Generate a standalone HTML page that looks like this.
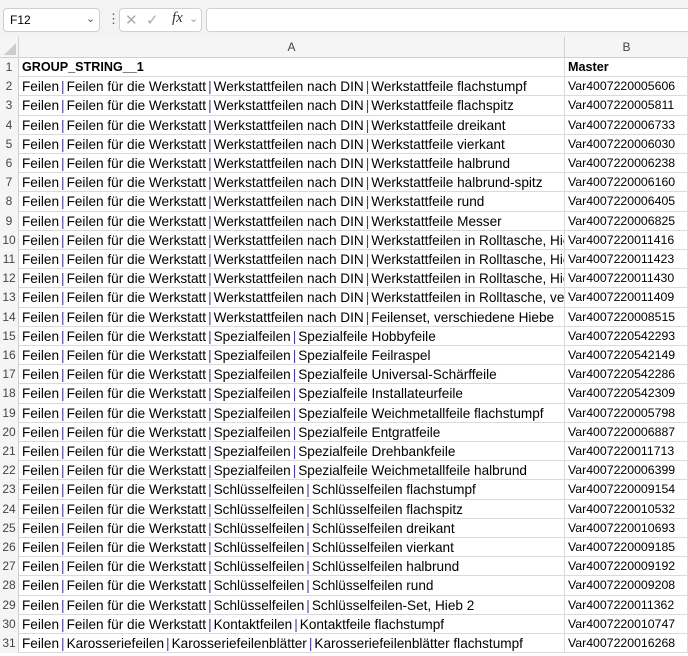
<!DOCTYPE html><html><head><style>
body{margin:0;width:688px;height:656px;overflow:hidden;background:#fff;font-family:"Liberation Sans",sans-serif;position:relative}
.top{position:absolute;left:0;top:0;width:688px;height:37px;background:#f3f3f3;border-bottom:1px solid #e1e1e1}
.box{position:absolute;top:8px;height:24px;background:#fff;border:1px solid #d0d0d0;border-radius:4px;box-sizing:border-box}
.hdr{position:absolute;top:37px;height:21px;background:#f5f5f5;border-bottom:1px solid #d0d0d0;box-sizing:border-box;font-size:12px;color:#444;text-align:center;line-height:21px}
.rh{position:absolute;left:0;width:19px;background:#f5f5f5;font-size:12px;color:#444;text-align:center;border-right:1px solid #d0d0d0;box-sizing:border-box}
.c{position:absolute;color:#000;white-space:nowrap;overflow:hidden;border-bottom:1px solid #dadada;border-right:1px solid #dadada;box-sizing:border-box;padding-left:3px;line-height:19px}
.a{font-size:13.6px}.b{font-size:12.3px}
.p{color:#4040a0;margin:0 2px}
</style></head><body>
<div class="top"></div>
<div class="box" style="left:3px;width:97px"><span style="position:absolute;left:6px;top:4px;font-size:12px">F12</span><span style="position:absolute;left:82px;top:3px;font-size:11px;color:#555">&#8964;</span></div>
<div style="position:absolute;left:107px;top:11px;font-size:13px;color:#555">&#8942;</div>
<div class="box" style="left:119px;width:83px"><span style="position:absolute;left:5px;top:2px;font-size:15px;color:#aaa">&#10005;</span><span style="position:absolute;left:26px;top:2px;font-size:15px;color:#aaa">&#10003;</span><span style="position:absolute;left:52px;top:1px;font-size:15px;font-style:italic;font-family:'Liberation Serif',serif;color:#333">fx</span><span style="position:absolute;left:69px;top:3px;font-size:11px;color:#999">&#8964;</span></div>
<div class="box" style="left:206px;width:490px"></div>
<div class="hdr" style="left:0;width:19px;border-right:1px solid #d0d0d0"><svg width="14" height="14" style="position:absolute;left:3px;top:5px"><path d="M13 1L13 13L1 13Z" fill="#ccc"/></svg></div>
<div class="hdr" style="left:19px;width:546px;border-right:1px solid #d0d0d0">A</div>
<div class="hdr" style="left:565px;width:123px">B</div>
<div id="g"></div>
<script>
var rows=[["GROUP_STRING__1","Master"],
["Feilen|Feilen für die Werkstatt|Werkstattfeilen nach DIN|Werkstattfeile flachstumpf","Var4007220005606"],
["Feilen|Feilen für die Werkstatt|Werkstattfeilen nach DIN|Werkstattfeile flachspitz","Var4007220005811"],
["Feilen|Feilen für die Werkstatt|Werkstattfeilen nach DIN|Werkstattfeile dreikant","Var4007220006733"],
["Feilen|Feilen für die Werkstatt|Werkstattfeilen nach DIN|Werkstattfeile vierkant","Var4007220006030"],
["Feilen|Feilen für die Werkstatt|Werkstattfeilen nach DIN|Werkstattfeile halbrund","Var4007220006238"],
["Feilen|Feilen für die Werkstatt|Werkstattfeilen nach DIN|Werkstattfeile halbrund-spitz","Var4007220006160"],
["Feilen|Feilen für die Werkstatt|Werkstattfeilen nach DIN|Werkstattfeile rund","Var4007220006405"],
["Feilen|Feilen für die Werkstatt|Werkstattfeilen nach DIN|Werkstattfeile Messer","Var4007220006825"],
["Feilen|Feilen für die Werkstatt|Werkstattfeilen nach DIN|Werkstattfeilen in Rolltasche, Hieb","Var4007220011416"],
["Feilen|Feilen für die Werkstatt|Werkstattfeilen nach DIN|Werkstattfeilen in Rolltasche, Hieb","Var4007220011423"],
["Feilen|Feilen für die Werkstatt|Werkstattfeilen nach DIN|Werkstattfeilen in Rolltasche, Hieb","Var4007220011430"],
["Feilen|Feilen für die Werkstatt|Werkstattfeilen nach DIN|Werkstattfeilen in Rolltasche, verschieden","Var4007220011409"],
["Feilen|Feilen für die Werkstatt|Werkstattfeilen nach DIN|Feilenset, verschiedene Hiebe","Var4007220008515"],
["Feilen|Feilen für die Werkstatt|Spezialfeilen|Spezialfeile Hobbyfeile","Var4007220542293"],
["Feilen|Feilen für die Werkstatt|Spezialfeilen|Spezialfeile Feilraspel","Var4007220542149"],
["Feilen|Feilen für die Werkstatt|Spezialfeilen|Spezialfeile Universal-Schärffeile","Var4007220542286"],
["Feilen|Feilen für die Werkstatt|Spezialfeilen|Spezialfeile Installateurfeile","Var4007220542309"],
["Feilen|Feilen für die Werkstatt|Spezialfeilen|Spezialfeile Weichmetallfeile flachstumpf","Var4007220005798"],
["Feilen|Feilen für die Werkstatt|Spezialfeilen|Spezialfeile Entgratfeile","Var4007220006887"],
["Feilen|Feilen für die Werkstatt|Spezialfeilen|Spezialfeile Drehbankfeile","Var4007220011713"],
["Feilen|Feilen für die Werkstatt|Spezialfeilen|Spezialfeile Weichmetallfeile halbrund","Var4007220006399"],
["Feilen|Feilen für die Werkstatt|Schlüsselfeilen|Schlüsselfeilen flachstumpf","Var4007220009154"],
["Feilen|Feilen für die Werkstatt|Schlüsselfeilen|Schlüsselfeilen flachspitz","Var4007220010532"],
["Feilen|Feilen für die Werkstatt|Schlüsselfeilen|Schlüsselfeilen dreikant","Var4007220010693"],
["Feilen|Feilen für die Werkstatt|Schlüsselfeilen|Schlüsselfeilen vierkant","Var4007220009185"],
["Feilen|Feilen für die Werkstatt|Schlüsselfeilen|Schlüsselfeilen halbrund","Var4007220009192"],
["Feilen|Feilen für die Werkstatt|Schlüsselfeilen|Schlüsselfeilen rund","Var4007220009208"],
["Feilen|Feilen für die Werkstatt|Schlüsselfeilen|Schlüsselfeilen-Set, Hieb 2","Var4007220011362"],
["Feilen|Feilen für die Werkstatt|Kontaktfeilen|Kontaktfeile flachstumpf","Var4007220010747"],
["Feilen|Karosseriefeilen|Karosseriefeilenblätter|Karosseriefeilenblätter flachstumpf","Var4007220016268"]];
var h="";
for(var i=0;i<rows.length;i++){var t=58+i*19.2;var b=i==0?"font-weight:bold;font-size:12.6px;":"";
h+='<div class="rh" style="top:'+t+'px;height:19.2px;line-height:19px">'+(i+1)+'</div>';
h+='<div class="c a" style="left:19px;top:'+t+'px;width:546px;height:19.2px;'+b+'">'+rows[i][0].replace(/\|/g,'<span class="p">|</span>')+'</div>';
h+='<div class="c b" style="left:565px;top:'+t+'px;width:123px;height:19.2px;'+b+'">'+rows[i][1]+'</div>';}
document.getElementById("g").innerHTML=h;
</script>
</body></html>
